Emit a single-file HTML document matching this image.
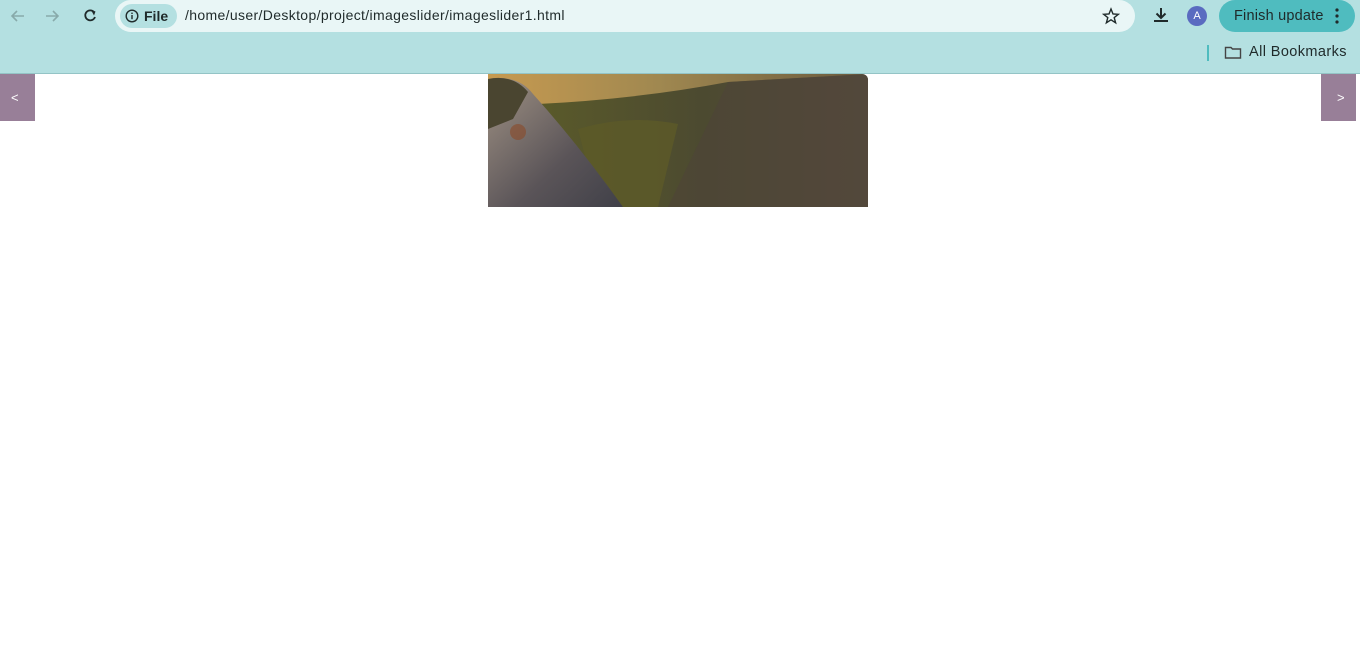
<!DOCTYPE html>
<html><head><meta charset="utf-8"><style>
*{margin:0;padding:0;box-sizing:border-box}
body{width:1360px;height:662px;background:#fff;font-family:"Liberation Sans","DejaVu Sans",sans-serif;position:relative;overflow:hidden}
.top{position:absolute;left:0;top:0;width:1360px;height:74px;background:#b4e0e1;border-bottom:1px solid #94c4c6}
.omni{position:absolute;left:115px;top:0;width:1020px;height:32px;background:#e9f6f6;border-radius:16px}
.chip{position:absolute;left:120px;top:4px;width:57px;height:24px;background:#b4e0e1;border-radius:12px;font-size:14px;font-weight:bold;color:#1f2a2a;line-height:24px;padding-left:24px}
.url{position:absolute;left:185px;top:7px;font-size:14px;color:#1f2a2a;letter-spacing:0.35px}
.fu{position:absolute;left:1219px;top:0;width:136px;height:32px;background:#4fbcbf;border-radius:16px;font-size:14.5px;color:#1f2a2a;line-height:32px;padding-left:15px;letter-spacing:0.2px}
.av{position:absolute;left:1187px;top:6px;width:20px;height:20px;border-radius:50%;background:#5a6bc0;color:#fff;font-size:11px;text-align:center;line-height:20px}
.bm{position:absolute;left:1249px;top:44px;font-size:14.5px;color:#1f2a2a;letter-spacing:0.4px}
.btn{position:absolute;top:74px;width:35px;height:47px;background:#987f98;color:#fff;font-size:13px;line-height:47px}
</style></head><body>
<div class="top">
<svg style="position:absolute;left:8px;top:7px" width="110" height="18" viewBox="0 0 110 18">
<path d="M16 9H4M9 4L4 9L9 14" stroke="#8aa" stroke-width="1.6" fill="none"/>
<path d="M38 9H50M45 4L50 9L45 14" stroke="#8aa" stroke-width="1.6" fill="none"/>
<path d="M86 5A5 5 0 1 0 87 10" stroke="#1f2a2a" stroke-width="1.8" fill="none"/><path d="M83 3L87.5 4.5L86 8.5Z" fill="#1f2a2a"/>
</svg>
<div class="omni"></div>
<div class="chip">File</div>
<svg style="position:absolute;left:125px;top:9px" width="14" height="14"><circle cx="7" cy="7" r="5.8" stroke="#1f2a2a" stroke-width="1.4" fill="none"/><rect x="6.3" y="6" width="1.4" height="4.2" fill="#1f2a2a"/><rect x="6.3" y="3.6" width="1.4" height="1.4" fill="#1f2a2a"/></svg>
<div class="url">/home/user/Desktop/project/imageslider/imageslider1.html</div>
<svg style="position:absolute;left:1102px;top:7px" width="18" height="18"><path d="M9 2L11 7L16.3 7.3L12.2 10.6L13.6 15.8L9 12.8L4.4 15.8L5.8 10.6L1.7 7.3L7 7Z" stroke="#1f2a2a" stroke-width="1.4" fill="none"/></svg>
<svg style="position:absolute;left:1152px;top:6px" width="18" height="18"><path d="M9 2V12M4.5 7.5L9 12L13.5 7.5" stroke="#1f2a2a" stroke-width="2" fill="none"/><path d="M2 15H16" stroke="#1f2a2a" stroke-width="2"/></svg>
<div class="av">A</div>
<div class="fu">Finish update</div>
<svg style="position:absolute;left:1334px;top:8px" width="6" height="16"><circle cx="3" cy="2" r="1.6" fill="#1f2a2a"/><circle cx="3" cy="8" r="1.6" fill="#1f2a2a"/><circle cx="3" cy="14" r="1.6" fill="#1f2a2a"/></svg>
<div style="position:absolute;left:1207px;top:45px;width:2px;height:16px;background:#4fbcbf"></div>
<svg style="position:absolute;left:1224px;top:45px" width="18" height="15"><path d="M1.5 2.5H7L8.5 4H16.5V13H1.5Z" stroke="#444" stroke-width="1.4" fill="none"/></svg>
<div class="bm">All Bookmarks</div>
</div>
<div class="btn" style="left:0;padding-left:11px">&lt;</div>
<div class="btn" style="left:1321px;padding-left:16px">&gt;</div>
<svg style="position:absolute;left:488px;top:74px;border-radius:0 6px 0 0" width="380" height="133" viewBox="0 0 380 133">
<defs>
<linearGradient id="sky" x1="0" y1="0" x2="1" y2="0"><stop offset="0" stop-color="#c79a50"/><stop offset="0.45" stop-color="#a08850"/><stop offset="1" stop-color="#6a5a3e"/></linearGradient>
<linearGradient id="f" x1="0" y1="0" x2="1" y2="0"><stop offset="0" stop-color="#5a5a2a"/><stop offset="0.5" stop-color="#4c4a30"/><stop offset="1" stop-color="#5a4e40"/></linearGradient>
<linearGradient id="r" x1="0" y1="0" x2="1" y2="1"><stop offset="0" stop-color="#a09284"/><stop offset="0.6" stop-color="#5a5458"/><stop offset="1" stop-color="#404048"/></linearGradient>
</defs>
<rect width="380" height="133" fill="url(#sky)"/>
<path d="M50 30Q150 25 240 8L380 0V133H50Z" fill="url(#f)"/>
<path d="M90 55Q140 40 190 50L170 133H110Z" fill="#5c5a28" opacity="0.8"/>
<path d="M240 8L380 0V133H180Z" fill="#4e4438" opacity="0.6"/>
<path d="M0 5Q30 0 45 20Q90 70 135 133H0Z" fill="url(#r)"/>
<path d="M0 5Q25 0 40 18L25 45L0 55Z" fill="#4a4530"/>
<circle cx="30" cy="58" r="8" fill="#8a4a28" opacity="0.6"/>
</svg>
</body></html>
